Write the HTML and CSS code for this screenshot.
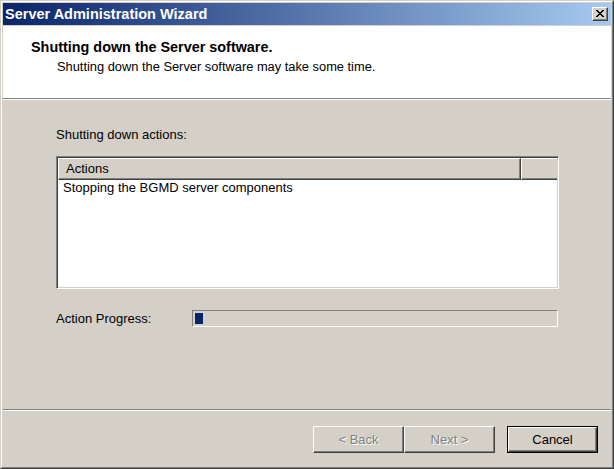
FILE: index.html
```html
<!DOCTYPE html>
<html>
<head>
<meta charset="utf-8">
<link rel="stylesheet" href="styles.css">
</head>
<body>
<div class="window">
  <div class="frame">
    <div class="titlebar">
      <span class="title">Server Administration Wizard</span>
      <div class="close">
        <svg width="8" height="7" viewBox="0 0 8 7" shape-rendering="crispEdges">
          <path d="M0 0h2v1h-2z M6 0h2v1h-2z M1 1h2v1h-2z M5 1h2v1h-2z M2 2h4v1h-4z M3 3h2v1h-2z M2 4h4v1h-4z M1 5h2v1h-2z M5 5h2v1h-2z M0 6h2v1h-2z M6 6h2v1h-2z" fill="#000"/>
        </svg>
      </div>
    </div>
    <div class="header">
      <div class="h-title">Shutting down the Server software.</div>
      <div class="h-sub">Shutting down the Server software may take some time.</div>
    </div>
    <div class="sep"></div>
    <div class="content">
      <div class="label">Shutting down actions:</div>
      <div class="listview">
        <div class="lv-head">
          <div class="col col-main">Actions</div>
          <div class="col col-rest"></div>
        </div>
        <div class="lv-row">Stopping the BGMD server components</div>
      </div>
      <div class="progress-row">
        <div class="p-label">Action Progress:</div>
        <div class="pbar"><div class="pblock"></div></div>
      </div>
    </div>
    <div class="sep"></div>
    <div class="buttons">
      <div class="btn disabled">&lt; Back</div>
      <div class="btn disabled">Next &gt;</div>
      <div class="btn-default"><div class="btn">Cancel</div></div>
    </div>
  </div>
</div>
</body>
</html>
```

FILE: styles.css
```css
* { box-sizing: border-box; }
html, body { margin: 0; padding: 0; background: #d4d0c8; }
body {
  font-family: "Liberation Sans", Arial, sans-serif;
  font-size: 13px;
  color: #000;
}
.window {
  width: 614px;
  height: 469px;
  border: 1px solid;
  border-color: #d4d0c8 #404040 #404040 #d4d0c8;
  display: flex;
  flex-direction: column;
}
.frame {
  flex: 1;
  border: 1px solid;
  border-color: #ffffff #808080 #808080 #ffffff;
  padding: 1px;
  display: flex;
  flex-direction: column;
  background: #d4d0c8;
}
.titlebar {
  height: 22px;
  background: linear-gradient(to right, #0a246a, #a6caf0);
  display: flex;
  align-items: center;
  justify-content: space-between;
  padding: 0 3px 0 2px;
}
.title {
  color: #fff;
  font-weight: bold;
  font-size: 14.5px;
}
.close {
  width: 16px;
  height: 14px;
  background: #d4d0c8;
  border: 1px solid;
  border-color: #fff #404040 #404040 #fff;
  box-shadow: inset -1px -1px #808080;
  display: flex;
  align-items: center;
  justify-content: center;
  padding-bottom: 1px;
}
.header {
  margin-top: 1px;
  height: 72px;
  background: #fff;
  padding: 13px 0 0 28px;
}
.h-title {
  font-weight: bold;
  font-size: 14.4px;
  line-height: 17px;
}
.h-sub {
  padding-left: 26px;
  line-height: 16px;
  margin-top: 3px;
  font-size: 12.85px;
}
.sep {
  height: 2px;
  border-top: 1px solid #808080;
  border-bottom: 1px solid #fff;
}
.content {
  flex: 1;
  padding: 27px 0 0 53px;
}
.label {
  line-height: 15px;
  margin-bottom: 14px;
}
.listview {
  width: 503px;
  height: 133px;
  background: #fff;
  border: 1px solid;
  border-color: #808080 #fff #fff #808080;
  box-shadow: inset 1px 1px #404040, inset -1px -1px #d4d0c8;
  padding: 1px;
  overflow: hidden;
}
.lv-head {
  display: flex;
  height: 22px;
}
.col {
  background: #d4d0c8;
  border: 1px solid;
  border-color: #fff #404040 #404040 #fff;
  box-shadow: inset -1px -1px #808080;
  line-height: 19px;
  padding-left: 7px;
}
.col-main { width: 463px; }
.col-rest { flex: 1; border-right: none; box-shadow: inset 0 -1px #808080; }
.lv-row {
  padding-left: 5px;
  line-height: 16px;
}
.progress-row {
  margin-top: 21px;
  display: flex;
  align-items: center;
}
.p-label { width: 136px; line-height: 17px; }
.pbar {
  width: 366px;
  height: 17px;
  border: 1px solid;
  border-color: #808080 #fff #fff #808080;
  padding: 2px;
}
.pblock {
  width: 8px;
  height: 11px;
  background: #0a246a;
}
.buttons {
  height: 55px;
  display: flex;
  justify-content: flex-end;
  align-items: flex-start;
  padding: 15px 13px 0 0;
}
.btn {
  width: 91px;
  height: 27px;
  background: #d4d0c8;
  border: 1px solid;
  border-color: #fff #404040 #404040 #fff;
  box-shadow: inset -1px -1px #808080, inset 1px 1px #d4d0c8;
  display: flex;
  align-items: center;
  justify-content: center;
}
.btn.disabled {
  color: #808080;
  text-shadow: 1px 1px 0 #fff;
}
.btn-default {
  margin-left: 12px;
  border: 1px solid #000;
}
.btn-default .btn {
  width: 89px;
  height: 25px;
}
```
